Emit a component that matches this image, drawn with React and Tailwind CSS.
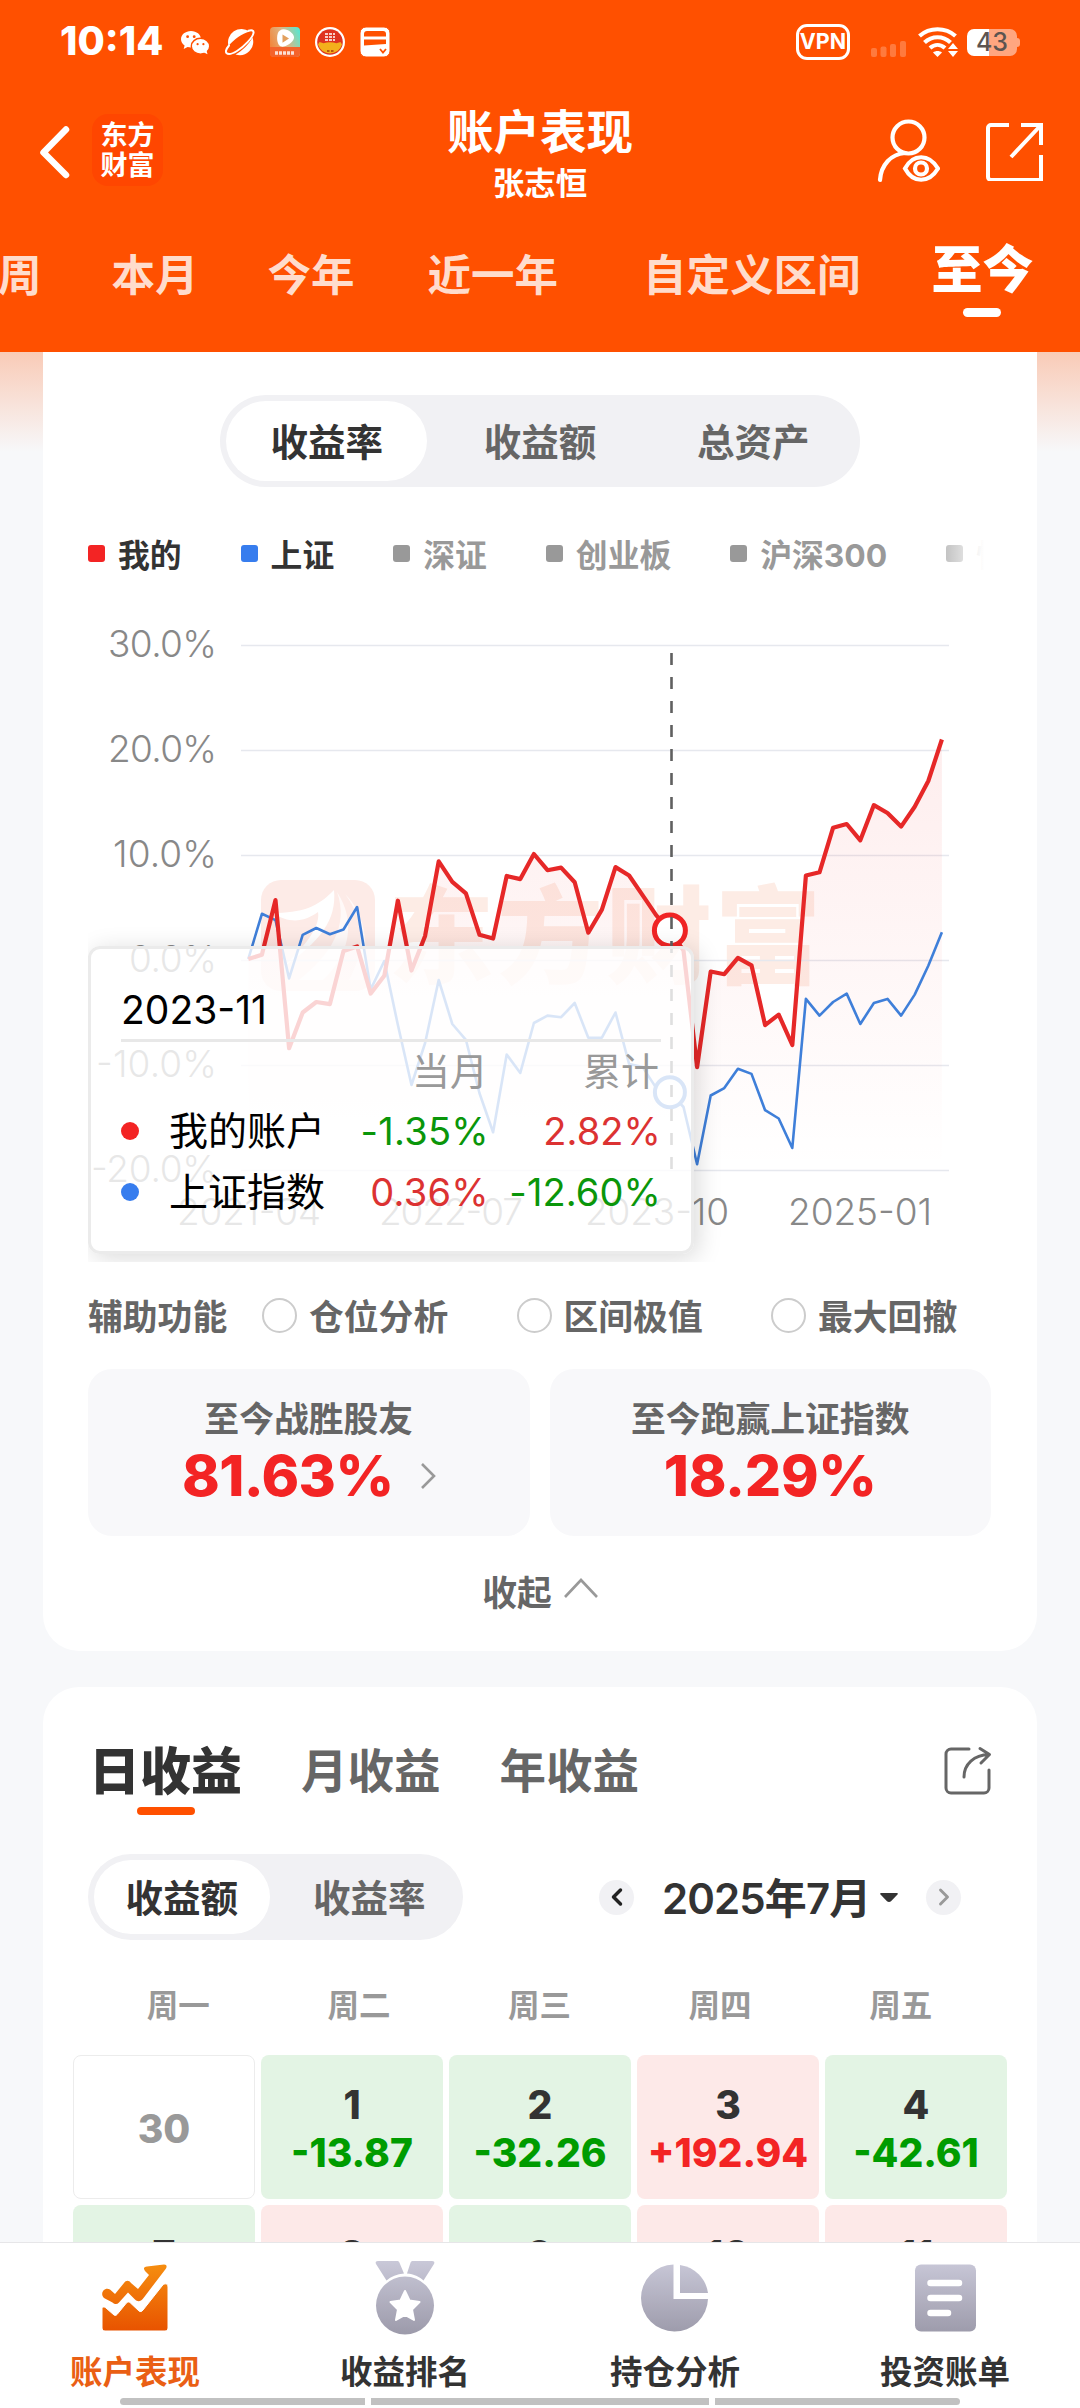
import { ChevronLeft } from 'lucide-react';
import clsx from 'clsx';

// Rendimento acumulado mensal (%), 2021-04 a 2025-07
const MINE = [
  0.1, 0.5, 5.7, -8.4, -5, -4, -4.2, 0.85, 1.3, -3.2, -1.5, 5.65, -1, 2.3, 9.4, 7.45, 6.35, 2.4, 2.05, 8, 7.7, 10.1, 8.55, 8.8, 7.4, 2.6,
  4.8, 8.85, 8.05, 6.15, 4.25, 2.82, 0.9, -10.2, -1.1, -1.35, 0.2, -0.5, -6.2, -5.2, -8.1, 8.05, 8.35, 12.6, 12.95, 11.4, 14.75, 14, 12.7, 14.6, 17.05, 21,
];
const INDEX = [
  0.1, 4.4, 3.8, -1.75, 2.4, 3.05, 2.45, 2.9, 5.05, -2.8, -0.1, -6.2, -11.9, -7.9, -1.9, -6.1, -7.6, -12.7, -16.4, -9, -10.75, -6, -5.3, -5.45, -4.1, -7.4,
  -7.4, -5, -9.9, -10.2, -12.2, -12.6, -14, -19.45, -12.9, -12.2, -10.35, -10.85, -14.3, -15.1, -17.9, -3.7, -5.3, -4, -3.2, -6.1, -4.1, -3.7, -5.3, -3.3, -0.55, 2.65,
];

const px = (i) => 248.3 + i * 13.6;
const py = (v) => 960 - v * 10.5;
const toPoints = (data) => data.map((v, i) => `${px(i).toFixed(1)},${py(v).toFixed(1)}`).join(' ');

const PERIODS = [
  { label: '周', cls: '-ml-[2px]' },
  { label: '本月', cls: 'ml-[70px]' },
  { label: '今年', cls: 'ml-[69px]' },
  { label: '近一年', cls: 'ml-[73px]' },
  { label: '自定义区间', cls: 'ml-[85px]' },
];

const LEGEND = [
  { label: '我的', box: 'bg-[#f32424]', text: 'text-[#333]' },
  { label: '上证', box: 'bg-[#377dee]', text: 'text-[#333]' },
  { label: '深证', box: 'bg-[#999]', text: 'text-[#999]' },
  { label: '创业板', box: 'bg-[#999]', text: 'text-[#999]' },
  { label: '沪深300', box: 'bg-[#999]', text: 'text-[#999]' },
  { label: '恒生', box: 'bg-[#999]', text: 'text-[#999]' },
];

const Y_LABELS = [
  { v: 30, label: '30.0%', w: 109 },
  { v: 20, label: '20.0%', w: 109 },
  { v: 10, label: '10.0%', w: 104 },
  { v: 0, label: '0.0%', w: 88 },
  { v: -10, label: '-10.0%', w: 121 },
  { v: -20, label: '-20.0%', w: 126 },
];

const X_LABELS = [
  { x: 177, label: '2021-04' },
  { x: 379, label: '2022-07' },
  { x: 585, label: '2023-10' },
  { x: 788, label: '2025-01' },
];

const DAYS = [
  { day: '30' },
  { day: '1', value: '-13.87' },
  { day: '2', value: '-32.26' },
  { day: '3', value: '+192.94' },
  { day: '4', value: '-42.61' },
  { day: '7', value: '-28.40' },
  { day: '8', value: '+64.15' },
  { day: '9', value: '-19.72' },
  { day: '10', value: '+37.08' },
  { day: '11', value: '+52.33' },
];

function StatusBar() {
  return (
    <div className="flex h-[84px] items-center pl-[60px] text-white">
      <span className="w-[99px] text-[39.500px] font-extrabold leading-none">10:14</span>
      <div className="ml-[21px] flex items-center gap-[15px]">
        {/* WeChat */}
        <svg width="30" height="30" viewBox="0 0 30 30" fill="none">
          <path d="M11 4C5.500 4 1 7.600 1 12.200c0 2.600 1.400 4.800 3.600 6.300L3.700 22l3.900-2c1.100.3 2.200.5 3.400.5C16.500 20.500 21 16.800 21 12.200S16.500 4 11 4Z" fill="#fff" />
          <ellipse cx="20.500" cy="19.200" rx="9.200" ry="7.900" fill="#fff" stroke="#ff5000" strokeWidth="1.400" />
          <path d="m23 25 4.500 2.300-1-4Z" fill="#fff" />
          <circle cx="7.600" cy="9.700" r="1.400" fill="#ff5000" />
          <circle cx="14.200" cy="9.700" r="1.400" fill="#ff5000" />
          <circle cx="17.600" cy="17.200" r="1.100" fill="#ff5000" />
          <circle cx="23.400" cy="17.200" r="1.100" fill="#ff5000" />
        </svg>
        {/* Planet */}
        <svg width="30" height="30" viewBox="0 0 30 30" fill="none">
          <path d="M3.500 19A13.500 13.500 0 0 1 24.500 4.500C17 7 9 12 3.500 19Z" fill="#fff" />
          <path d="M27.500 10.500A13.500 13.500 0 0 1 10.500 27.500C17.500 23.500 23.500 18 27.500 10.500Z" fill="#fff" />
          <path d="M23.500 3.800c3-1 5.500-.6 5 2.200C28 10 20 19 12 24c-5 3-9 3.600-10.500 2C.2 24.500 1.500 21.500 4 18.500" stroke="#fff" strokeWidth="2" strokeLinecap="round" />
        </svg>
        {/* Short-video app */}
        <svg width="30" height="30" viewBox="0 0 30 30">
          <defs>
            <linearGradient id="video" x1="0" y1="0.600" x2="1" y2="0.200">
              <stop offset="0" stopColor="#f2853a" />
              <stop offset="0.500" stopColor="#dfb583" />
              <stop offset="1" stopColor="#5be6cf" />
            </linearGradient>
          </defs>
          <rect width="30" height="30" rx="4" fill="url(#video)" />
          <path d="M0 20h30v6a4 4 0 0 1-4 4H4a4 4 0 0 1-4-4Z" fill="#f4632b" />
          <path d="M10 3.500c5-4 15 3 14 7.500-1 5-9 9.500-13 8.500-5-2-5-14-1-16Z" fill="#fff" />
          <path d="m12.500 7.500 6.500 3.900-6.500 4.300Z" fill="#e2a05e" />
          <path d="M5 26h20" stroke="#fff" strokeWidth="3.600" strokeDasharray="3 1" opacity="0.800" />
        </svg>
        {/* Round badge */}
        <svg width="30" height="30" viewBox="0 0 30 30">
          <circle cx="15" cy="15" r="15" fill="#fff" />
          <circle cx="15" cy="15" r="12.800" fill="#df3320" />
          <path d="M3 17.500l1.500-2.500 4 1.200c4-1.200 9-1.200 13 0l4-1.200 1.500 2.500A12.500 12.500 0 0 1 3 17.500Z" fill="#f3b01c" />
          <path d="M10 7h10M10 10h10M10 13h10" stroke="#fff" strokeWidth="1.600" strokeDasharray="3 1" />
          <path d="M12 24h2.500M16 24h2.500" stroke="#b8560f" strokeWidth="2" />
        </svg>
        {/* Card wallet */}
        <svg width="30" height="30" viewBox="0 0 30 30" fill="none" stroke="#ff5000">
          <rect width="30" height="30" rx="6" fill="#fff" />
          <path d="M4 9.500V7a3 3 0 0 1 3-3h16a3 3 0 0 1 3 3v2.500Z" fill="#ff5000" stroke="none" />
          <path d="M4 12.500h22V17L4 18.500Z" fill="#ff5000" stroke="none" />
          <path d="m20 22 3 3.500 3-3.500" strokeWidth="1.800" />
        </svg>
      </div>
      <div className="ml-auto mr-[60px] flex items-center">
        <span className="flex h-[36px] w-[54px] items-center justify-center rounded-[11px] border-[3px] border-white text-[21.500px] font-bold leading-none">
          VPN
        </span>
        <svg className="ml-[20px]" width="38" height="32" viewBox="0 0 38 32" fill="#fff" opacity="0.240">
          <rect x="1" y="22" width="6" height="9" rx="2" />
          <rect x="10.500" y="20.500" width="6" height="10.500" rx="2" />
          <rect x="20" y="18" width="6" height="13" rx="2" />
          <rect x="30" y="15" width="6" height="16" rx="2" />
        </svg>
        <svg className="ml-[10px]" width="40" height="32" viewBox="0 0 40 32" fill="none" stroke="#fff" strokeWidth="4.200">
          <path d="M1.500 10C11.500 1 27.500 1 37.500 10" />
          <path d="M6.500 16.500C14 9.500 25 9.500 32.500 16.500" />
          <path d="M12 22c4.500-4 10.500-4 15 0" />
          <path d="M15 26.500c2.500-2 6.500-2 9 0L19.500 31Z" fill="#fff" stroke="none" />
          <path d="m30 23 5-6 5 6ZM30 25h10l-5 6Z" fill="#fff" stroke="none" />
        </svg>
        <div className="ml-[9px] flex items-center">
          <div className="flex h-[27px] w-[50px] items-center justify-center rounded-[7px] bg-[linear-gradient(90deg,#fff_44%,#ffa680_44%)] text-[25px] font-medium leading-none text-[#5c5450]">
            43
          </div>
          <div className="h-[9px] w-[3px] rounded-r-[3px] bg-[#ffa680]" />
        </div>
      </div>
    </div>
  );
}

function Header() {
  return (
    <header className="h-[352px] shrink-0 bg-[#ff5000] text-white">
      <StatusBar />
      <div className="grid h-[132px] grid-cols-[1fr_auto_1fr] items-center">
        <div className="flex items-center">
          <svg className="ml-[38px] mt-[3px]" width="34" height="56" viewBox="0 0 34 56" fill="none" stroke="#fff" strokeWidth="6.500" strokeLinecap="round" strokeLinejoin="round">
            <path d="M28 5.500 5.500 28.500 28 51" />
          </svg>
          <div className="ml-[20px] flex h-[72px] w-[71px] flex-col items-center justify-center rounded-[16px] bg-[#ff4600] pt-[2px] text-[27px] font-bold leading-[30px]">
            <span>东方</span>
            <span>财富</span>
          </div>
        </div>
        <div className="flex flex-col items-center pt-[6px]">
          <h1 className="text-[46.500px] font-bold leading-[54px]">账户表现</h1>
          <p className="mt-[7px] text-[31.500px] font-bold leading-[36px]">张志恒</p>
        </div>
        <div className="flex items-center justify-end pr-[36px] pt-[1px]">
          <svg width="64" height="64" viewBox="0 0 64 64" fill="none" stroke="#fff" strokeWidth="4.200" strokeLinecap="round">
            <circle cx="32.500" cy="18.500" r="16" />
            <path d="M4 61c1-15 11-26 25-27" />
            <path d="M29 49.500c8-15 24-15 33 0-9 15-25 15-33 0Z" />
            <circle cx="45" cy="49.500" r="6" />
          </svg>
          <svg className="ml-[44px]" width="60" height="60" viewBox="0 0 60 60" fill="none" stroke="#fff" strokeWidth="4">
            <path d="M25 4H7a3 3 0 0 0-3 3v49a3 3 0 0 0 3 3h50V34" />
            <path d="M37 4h20v20M57 4 27 36" />
          </svg>
        </div>
      </div>
      <nav className="flex h-[120px] items-center overflow-hidden whitespace-nowrap text-[43.500px] font-bold leading-none text-[#ffdccc]">
        {PERIODS.map((p) => (
          <span key={p.label} className={clsx('shrink-0', p.cls)}>{p.label}</span>
        ))}
        <div className="relative ml-[71px] shrink-0 -translate-y-[7px] text-[51px] font-black text-white">
          至今
          <span className="absolute -bottom-[22px] left-[31px] h-[9px] w-[38px] rounded-full bg-white" />
        </div>
      </nav>
    </header>
  );
}

function Segmented({ items, active, className }) {
  return (
    <div className={clsx('flex rounded-full bg-[#f1f1f4] text-[37.500px] leading-none', className)}>
      {items.map((item) => (
        <div key={item} className="flex-1 p-[6px]">
          <div
            className={clsx(
              'flex h-full items-center justify-center rounded-full pt-[3px] font-bold',
              item === active ? 'bg-white text-[#333]' : 'text-[#666]'
            )}
          >
            {item}
          </div>
        </div>
      ))}
    </div>
  );
}

function TooltipRow({ dot, name, month, monthCls, total, totalCls }) {
  return (
    <div className="flex h-[61px] items-center text-[38px] leading-none">
      <span className={clsx('h-[18px] w-[18px] rounded-full', dot)} />
      <span className="ml-[30px] w-[165px] whitespace-nowrap text-[39px] text-black">{name}</span>
      <span className={clsx('w-[155px] text-right tracking-[0.300px]', monthCls)}>{month}</span>
      <span className={clsx('w-[172px] text-right tracking-[0.100px]', totalCls)}>{total}</span>
    </div>
  );
}

function ReturnChart() {
  return (
    <div className="relative mt-[26px] h-[662px] w-[904px] overflow-hidden">
      <svg width="904" height="662" viewBox="88 600 904 662" fill="none" fontFamily="Inter, sans-serif">
        <defs>
          <linearGradient id="area" gradientUnits="userSpaceOnUse" x1="0" y1="740" x2="0" y2="1170">
            <stop offset="0" stopColor="#f02424" stopOpacity="0.080" />
            <stop offset="1" stopColor="#f02424" stopOpacity="0" />
          </linearGradient>
        </defs>

        {/* Watermark */}
        <rect x="261" y="880" width="114" height="111" rx="20" fill="#fdebe7" />
        <path d="M272 913c30 0 46-6 62-23 3 30-14 52-52 78 30-28 38-45 36-56-14 10-28 12-46 1Z" fill="#fff" />
        <path d="M337 892c12 34-6 62-38 88h24c26-24 34-58 14-88ZM345 894c20 26 20 58 4 86h14c6-40 2-66-18-86Z" fill="#fff" opacity="0.700" />
        <text x="388" y="975" fontSize="106" letterSpacing="3" fontWeight="900" fill="#fdece5" fontFamily="'Noto Sans CJK SC', sans-serif">东方财富</text>

        {Y_LABELS.map((l) => (
          <g key={l.v}>
            <line x1="241" x2="949" y1={py(l.v) + 0.5} y2={py(l.v) + 0.5} stroke="#e6e8ee" strokeWidth="1.500" />
            <text x={217 - l.w} y={py(l.v) + 12} textLength={l.w} fontSize="37" fontWeight="300" fill="#888">{l.label}</text>
          </g>
        ))}
        {X_LABELS.map((l) => (
          <text key={l.label} x={l.x} y="1225" textLength="144" fontSize="37" fontWeight="300" fill="#888">{l.label}</text>
        ))}

        <polygon points={`${px(0)},1170 ${toPoints(MINE)} ${px(51)},1170`} fill="url(#area)" />
        <polyline points={toPoints(INDEX)} stroke="#3f7fd9" strokeWidth="2.600" strokeLinejoin="round" />
        <polyline points={toPoints(MINE)} stroke="#e62828" strokeWidth="4.200" strokeLinejoin="round" />
        <circle cx={px(31)} cy={py(-12.6)} r="15" fill="#fff" stroke="#3f7fd9" strokeWidth="4" />
        <circle cx={px(31)} cy={py(2.82)} r="15.500" fill="#fff" stroke="#f02424" strokeWidth="5" />
        <line x1="671.500" x2="671.500" y1="653" y2="1170" stroke="#606060" strokeWidth="2.600" strokeDasharray="12 12" />
      </svg>

      <div className="absolute left-0 top-[346px] h-[308px] w-[606px] rounded-[12px] border-[3px] border-[#ebebeb] bg-white/80 px-[30px] shadow-[4px_4px_24px_rgba(0,0,0,0.15)]">
        <div className="flex h-[93px] items-center border-b-[3px] border-[#e8e8e8] pt-[31px] text-[39px] leading-none text-black">
          2023-11
        </div>
        <div className="flex h-[58px] items-center text-[38px] leading-none text-[#999]">
          <span className="w-[367px] text-right">当月</span>
          <span className="w-[171px] text-right">累计</span>
        </div>
        <TooltipRow dot="bg-[#f32424]" name="我的账户" month="-1.35%" monthCls="text-[#0a960a]" total="2.82%" totalCls="text-[#dc3232]" />
        <TooltipRow dot="bg-[#377dee]" name="上证指数" month="0.36%" monthCls="text-[#dc3232]" total="-12.60%" totalCls="text-[#0a960a]" />
      </div>
    </div>
  );
}

function PerformanceCard() {
  return (
    <section className="mx-[43px] rounded-b-[36px] bg-white px-[45px] pb-[39px] pt-[43px]">
      <Segmented items={['收益率', '收益额', '总资产']} active="收益率" className="mx-auto h-[92px] w-[640px]" />

      <div className="relative mt-[47px] flex h-[40px] w-[896px] items-center gap-[59px] overflow-hidden whitespace-nowrap text-[31.800px] font-bold leading-none">
        {LEGEND.map((l) => (
          <div key={l.label} className={clsx('flex shrink-0 items-center gap-[13px]', l.text)}>
            <span className={clsx('h-[17px] w-[17px] rounded-[3px]', l.box)} />
            <span className="pt-[3px]">{l.label}</span>
          </div>
        ))}
        <div className="absolute right-0 top-0 h-full w-[52px] bg-linear-to-r from-white/20 to-white" />
      </div>

      <ReturnChart />

      <div className="mt-[34px] flex h-[40px] items-center whitespace-nowrap text-[34.800px] font-bold leading-none text-[#666]">
        <span className="w-[174px] shrink-0 pt-[2px]">辅助功能</span>
        {['仓位分析', '区间极值', '最大回撤'].map((item) => (
          <div key={item} className="flex w-[254.500px] shrink-0 items-center last:w-auto">
            <span className="mr-[12px] h-[35px] w-[35px] rounded-full border-[2.500px] border-[#ccc]" />
            <span className="pt-[2px]">{item}</span>
          </div>
        ))}
      </div>

      <div className="mt-[33px] grid h-[167px] w-[903px] grid-cols-2 gap-[20px] text-center">
        <div className="rounded-[24px] bg-[#f8f8fa] pt-[30px]">
          <p className="text-[34.800px] font-bold leading-[40px] text-[#666]">至今战胜股友</p>
          <div className="mt-[7px] flex items-center justify-center gap-[26px]">
            <span className="text-[57px] font-extrabold leading-[60px] tracking-[-0.600px] text-[#f32424]">81.63%</span>
            <svg width="16" height="28" viewBox="0 0 16 28" fill="none" stroke="#999" strokeWidth="2.600">
              <path d="m2 2 12 12L2 26" />
            </svg>
          </div>
        </div>
        <div className="rounded-[24px] bg-[#f8f8fa] pt-[30px]">
          <p className="text-[34.800px] font-bold leading-[40px] text-[#666]">至今跑赢上证指数</p>
          <p className="mt-[7px] text-[57px] font-extrabold leading-[60px] tracking-[-0.300px] text-[#f32424]">18.29%</p>
        </div>
      </div>

      <div className="mt-[36px] flex h-[40px] items-center justify-center gap-[12px] text-[34.800px] font-bold leading-none text-[#666]">
        <span className="pt-[2px]">收起</span>
        <svg className="-mt-[8px]" width="34" height="20" viewBox="0 0 34 20" fill="none" stroke="#999" strokeWidth="2.600">
          <path d="m1 19 16-17 16 17" />
        </svg>
      </div>
    </section>
  );
}

function DayCell({ day, value }) {
  const isLoss = value && value.startsWith('-');
  return (
    <div
      className={clsx(
        'flex h-[144px] flex-col items-center rounded-[8px] text-[39px] font-extrabold leading-[48px]',
        !value && 'justify-center border border-[#ececec] pt-[4px] text-[#999]',
        value && 'pt-[26px] text-[#333]',
        value && (isLoss ? 'bg-[#e3f4e4]' : 'bg-[#fde9e8]')
      )}
    >
      <span>{day}</span>
      {value && <span className={isLoss ? 'text-[#009c00]' : 'text-[#f32424]'}>{value}</span>}
    </div>
  );
}

function CalendarCard() {
  return (
    <section className="mx-[43px] mt-[36px] rounded-t-[36px] bg-white pt-[53px]">
      <div className="flex h-[60px] items-center pl-[46px] pt-[2px] text-[46.500px] font-bold leading-none text-[#666]">
        <div className="relative text-[51px] font-black text-[#333]">
          日收益
          <span className="absolute -bottom-[18px] left-[48px] h-[8px] w-[58px] rounded-full bg-[#ff5000]" />
        </div>
        <span className="ml-[59px]">月收益</span>
        <span className="ml-[59px]">年收益</span>
        <svg className="ml-auto mr-[45px]" width="48" height="50" viewBox="0 0 48 50" fill="none" stroke="#666" strokeWidth="3" strokeLinecap="round" strokeLinejoin="round">
          <path d="M25 3H7a5 5 0 0 0-5 5v34a5 5 0 0 0 5 5h33a5 5 0 0 0 5-5V24" />
          <path d="M20 31C20 18 30 9 45 8.500M36 2.500l9.500 6L37 17" />
        </svg>
      </div>

      <div className="mt-[54px] flex h-[86px] items-center pl-[45px]">
        <Segmented items={['收益额', '收益率']} active="收益额" className="h-full w-[375px]" />
        <span className="ml-[136px] flex h-[35px] w-[35px] items-center justify-center rounded-full bg-[#f1f1f4]">
          <ChevronLeft size={28} strokeWidth={3} color="#222" />
        </span>
        <span className="ml-[28px] w-[218px] whitespace-nowrap pt-[3px] text-[42px] font-semibold leading-none tracking-[-0.900px] text-[#333]">2025年7月</span>
        <svg width="18" height="9" viewBox="0 0 18 9" fill="#333">
          <path d="M1 0h16c1 0 1 1 .5 1.500L11 8.200c-1 1-3 1-4 0L.5 1.500C0 1 0 0 1 0Z" />
        </svg>
        <span className="ml-[28px] flex h-[35px] w-[35px] items-center justify-center rounded-full bg-[#f1f1f4]">
          <ChevronLeft className="rotate-180" size={28} strokeWidth={2.5} color="#999" />
        </span>
      </div>

      <div className="ml-[45px] mt-[45px] grid h-[40px] w-[903px] grid-cols-5 items-center pt-[2px] text-center text-[31.500px] font-bold leading-none text-[#999]">
        {['周一', '周二', '周三', '周四', '周五'].map((d) => (
          <span key={d}>{d}</span>
        ))}
      </div>

      <div className="mx-[30px] mt-[30px] grid grid-cols-5 gap-[6px]">
        {DAYS.map((d) => (
          <DayCell key={d.day} {...d} />
        ))}
      </div>
    </section>
  );
}

function TabBar() {
  const tabs = [
    {
      label: '账户表现',
      icon: (
        <>
          <path d="M4 37C-.5 33 4 25.500 10 28.500l5 4.500L24 22c2-3 5-3 7 0l7 6 11-14-4-4c-2-3-1-4 2-4.500L64 3.500c3 0 3 2 2 4L43.500 37c-3 4-6 4-8.500 1.500L28 31.500l-9 10c-2 2-4 2-6.500 0Z" fill="url(#orange)" />
          <path d="m6 47 8 7c1 .8 2 .5 3-.5l9-11c2-2 3-2 5 0l8 7.500c1.500 1 2.500.8 4-1L62 25c2-3 6-3 6 1v41c0 1.500-1 3-3 3H5c-2 0-3-1.500-3-3V48c0-2 2-2.800 4-1Z" fill="url(#orange)" stroke="#fff" strokeWidth="1" />
        </>
      ),
    },
    {
      label: '收益排名',
      icon: (
        <>
          <path d="M8 0h19c1.500 0 2 .6 2.600 2L34 12.500c-7 .5-13 3-17.500 7L6 3c-1-2 0-3 2-3ZM62 0H43c-1.500 0-2 .6-2.600 2L37 12.500c7 .5 12 3 16.500 7L64 3c1-2 0-3-2-3Z" fill="url(#grey)" />
          <circle cx="35" cy="44.500" r="29" fill="url(#grey)" />
          <path d="m35 30 4.500 9.500 10 1.500-7.500 7.500 2 10.500-9-5-9 5 2-10.500-7.500-7.500 10-1.500Z" fill="#fff" stroke="#fff" strokeWidth="2" strokeLinejoin="round" />
        </>
      ),
    },
    {
      label: '持仓分析',
      icon: (
        <>
          <path d="M33.500 3.500V38H68A33.500 33.500 0 1 1 33.500 3.500Z" fill="url(#grey)" />
          <path d="M40 4a33 33 0 0 1 28 28H40Z" fill="url(#grey)" />
        </>
      ),
    },
    {
      label: '投资账单',
      icon: (
        <>
          <rect x="5" y="3.500" width="61" height="67" rx="6" fill="url(#grey)" />
          <path d="M20.500 22H49M20.500 37H49M20.500 52H38" stroke="#fff" strokeWidth="6.500" strokeLinecap="round" />
        </>
      ),
    },
  ];

  return (
    <footer className="h-[166px] shrink-0 border-t border-[#e6e6e8] bg-white">
      <svg className="absolute" width="0" height="0">
        <defs>
          <linearGradient id="orange" gradientUnits="userSpaceOnUse" x1="0" y1="2" x2="0" y2="70">
            <stop offset="0" stopColor="#f68f10" />
            <stop offset="1" stopColor="#e85300" />
          </linearGradient>
          <linearGradient id="grey" gradientUnits="userSpaceOnUse" x1="0" y1="0" x2="0" y2="72">
            <stop offset="0" stopColor="#c9c8d8" />
            <stop offset="1" stopColor="#9d9bab" />
          </linearGradient>
        </defs>
      </svg>
      <div className="grid h-[155px] grid-cols-4">
        {tabs.map((t, i) => (
          <div key={t.label} className="flex flex-col items-center pt-[18px]">
            <svg width="70" height="76" viewBox="0 0 70 76">{t.icon}</svg>
            <span className={clsx('mt-[16px] text-[32.500px] font-bold leading-[40px]', i === 0 ? 'text-[#ea5f14]' : 'text-[#333]')}>
              {t.label}
            </span>
          </div>
        ))}
      </div>
      <div className="mx-[120px] grid h-[7px] grid-cols-[245px_1fr_245px] gap-[6px]">
        <span className="rounded-l-full bg-[#c1c1c1]" />
        <span className="bg-[#c1c1c1]" />
        <span className="rounded-r-full bg-[#c1c1c1]" />
      </div>
    </footer>
  );
}

export default function App() {
  return (
    <div className="flex h-[2408px] w-[1080px] flex-col overflow-hidden bg-[#f7f8fa] font-['Inter','Noto_Sans_CJK_SC',sans-serif]">
      <Header />
      <main className="min-h-0 flex-1 overflow-hidden bg-[linear-gradient(#f9cbb7,#f7f8fa_100px)]">
        <PerformanceCard />
        <CalendarCard />
      </main>
      <TabBar />
    </div>
  );
}
